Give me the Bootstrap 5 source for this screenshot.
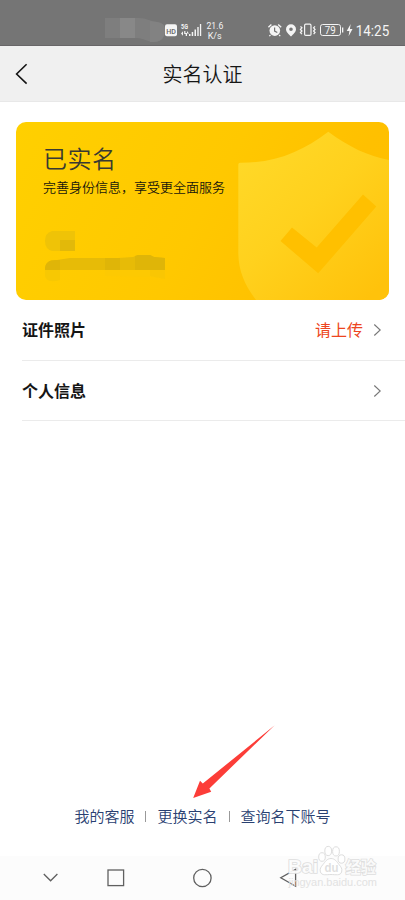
<!DOCTYPE html>
<html lang="zh-CN">
<head>
<meta charset="utf-8">
<meta name="viewport" content="width=device-width, initial-scale=1">
<title>实名认证</title>
<link href="https://cdn.jsdelivr.net/npm/bootstrap@5.3.0/dist/css/bootstrap.min.css" rel="stylesheet">
<style>
html,body{height:100%}
body{font-family:"Noto Sans CJK SC",sans-serif;background:#fff;color:#111;overflow:hidden}
svg{display:block}
.screen{width:405px;height:900px}
.status-bar{height:46px;background:#757575;border-bottom:1px solid #686668}
.title-bar{height:56px;background:#f0f0f0;border-bottom:1px solid #e8e8e8;padding:0 15px}
.title-bar h1{font-size:20px;line-height:24px;font-weight:350;color:#161616}
.side{width:14px}
.id-card{height:178px;margin:20px 16px 0;border-radius:10px;background:linear-gradient(118deg,#ffd000 0%,#ffc800 50%,#ffc000 78%,#ffbe00 100%);padding:21px 27px}
.id-card h2{font-size:24px;line-height:30px;font-weight:350;color:#393a32;letter-spacing:.5px}
.id-card p{font-size:13px;line-height:18px;font-weight:350;color:#17160c;margin-top:5px}
.shield{right:0;top:0}
.redacted{margin-top:35px;margin-left:2px}
.item{height:60px;margin-left:22px;padding-right:23px;border-bottom:1px solid #ebebeb;font-size:16px}
.item:first-of-type{height:61px}
.item span{line-height:24px;padding-bottom:2px}
.item-label{font-weight:700;color:#151515}
.upload{color:#ed4520;margin-right:10px}
.foot-links{height:24px;font-size:15px;line-height:24px}
.foot-links a{color:#294071;font-weight:350}
.sep{width:1px;height:11px;background:#999;margin:0 11px}
.arrow{left:190px;top:722px}
.nav-bar{height:44px;margin-top:28px;background:#fcfcfc}
.watermark{left:284px;top:842px}
.watermark text{paint-order:stroke}
</style>
</head>
<body>
<div class="screen d-flex flex-column position-relative">
  <header class="status-bar flex-shrink-0">
    <svg width="405" height="45" viewBox="0 0 405 45" font-family="Roboto, sans-serif" fill="#f4f4f4">
      <path d="M105 18h34c7 0 11 3 17 4 6 0 9 3 9 8 0 8-4 12-11 12-6 0-11-4-17-4h-32z" fill="#7e7e7e"/>
      <path d="M120 18h15v20h-15z" fill="#888"/><path d="M150 21c9 1 15 2 15 9s-4 12-11 12h-4z" fill="#828282"/>
      <rect x="165" y="24.3" width="12" height="12" rx="2"/>
      <text x="166.2" y="33.5" font-size="8" font-weight="500" fill="#666" textLength="9.7" lengthAdjust="spacingAndGlyphs">HD</text>
      <text x="181" y="29.2" font-size="6.5" font-weight="700" textLength="7" lengthAdjust="spacingAndGlyphs">5G</text>
      <path d="M181 33.5l2-2.3v4.6zM184.2 31h1.2v2h1.6v-2l2 2.5h-2v2.500h-1.300v-2h-1.500z"/>
      <path d="M189 34h1.500v2H189zM191.700 32h1.500v4h-1.500zM194.500 29.500h1.500V36h-1.500zM197.300 27h1.400v9h-1.400zM199.900 24h1.300v12h-1.300z"/>
      <text x="206.500" y="28.500" font-size="9" textLength="16.800" lengthAdjust="spacingAndGlyphs">21.6</text>
      <text x="207.700" y="39" font-size="9" textLength="14" lengthAdjust="spacingAndGlyphs">K/s</text>
      <circle cx="274.800" cy="30.600" r="5.300"/>
      <path d="M268.400 27.200l3-2.800M281.200 27.200l-3-2.800" fill="none" stroke="#f4f4f4" stroke-width="1.400"/>
      <path d="M270.500 35l-1.200 1.200M279.100 35l1.200 1.200" stroke="#f4f4f4" stroke-width="1.200"/>
      <path d="M274.600 27.400v3.700l2.700 1.500" fill="none" stroke="#757575" stroke-width="1.200"/>
      <path fill-rule="evenodd" d="M291 24.200a5 5 0 0 0-5 5c0 3 2.800 4.900 5 7.300 2.200-2.400 5-4.300 5-7.300a5 5 0 0 0-5-5zm0 3.200a1.800 1.800 0 1 1 0 3.600 1.800 1.800 0 0 1 0-3.600z"/>
      <rect x="304.600" y="24.200" width="6.400" height="11.200" rx="1.200" fill="none" stroke="#f4f4f4" stroke-width="1.200"/>
      <path d="M300.500 26.400l1.400 1.400-1.400 1.600 1.400 1.600-1.400 1.600 1.400 1.500M315 26.400l-1.400 1.400 1.400 1.600-1.400 1.600 1.400 1.600-1.400 1.500" fill="none" stroke="#f4f4f4" stroke-width="1.300"/>
      <rect x="320.500" y="24.500" width="20" height="11" rx="2.200" fill="none" stroke="#f4f4f4"/>
      <path d="M342 27.500h1.300v5H342z"/>
      <text x="324.800" y="33.700" font-size="10" textLength="11" lengthAdjust="spacingAndGlyphs">79</text>
      <path d="M350.700 24l-4 7h2.700l-.8 5.200 3.900-7.200h-2.600z"/>
      <text x="355.800" y="36" font-size="14.300" textLength="33.400" lengthAdjust="spacingAndGlyphs">14:25</text>
    </svg>
  </header>
  <nav class="title-bar d-flex align-items-center justify-content-between flex-shrink-0">
    <svg class="side" width="14" height="22" viewBox="0 0 14 22" fill="none" stroke="#151515" stroke-width="1.600"><path d="M11.600 1.200L1.600 11l10 9.600"/></svg>
    <h1 class="m-0">实名认证</h1>
    <span class="side"></span>
  </nav>
  <main class="d-flex flex-column flex-grow-1">
    <section class="id-card position-relative overflow-hidden flex-shrink-0">
      <svg class="shield position-absolute" width="151" height="178" viewBox="238 122 151 178">
        <defs><linearGradient id="sg" x1="0" y1="0" x2=".85" y2="1"><stop offset="0" stop-color="#ffda2a"/><stop offset=".5" stop-color="#ffd11d"/><stop offset="1" stop-color="#ffc20b"/></linearGradient></defs>
        <path d="M238.300 164.500q0-1.800 1.800-1.800C276 163 303 151 328.300 131.700 349 147 368 156 389 160V300H256C244 284 238.300 270 238.300 252z" fill="url(#sg)"/>
        <path d="M280.500 241L292 227.500l24.700 20L363 194.600l13.300 12L318.200 273.300z" fill="#ffc000"/>
      </svg>
      <div class="position-relative">
        <h2 class="m-0">已实名</h2>
        <p class="mb-0">完善身份信息，享受更全面服务</p>
        <svg class="redacted" width="120" height="52" viewBox="45 231 120 52">
          <path d="M52 231h23v20H52q-7-2-7-10t7-10z" fill="#efc307"/><path d="M60 240h15v11H60z" fill="#e2b90a"/>
          <path d="M45 270c0-7 3-10 12-10l13-2h48l15-1 5-2h12l4 2 11 1v12z" fill="#e7bb07"/>
          <path d="M45 270c0-7 3-10 12-10h3v10zM105 258h15v12h-15zM135 256l3-1h12l4 2 11 1v12h-30z" fill="#dfb508"/>
          <path d="M45 270h15v10q-13 4-15-4z" fill="#f7c803"/><path d="M105 270h60v9l-15-2-45-1z" fill="#fdc902"/><path d="M150 270h15v9l-15-3z" fill="#f9c603"/>
        </svg>
      </div>
    </section>
    <div class="item d-flex align-items-center flex-shrink-0">
      <span class="item-label me-auto">证件照片</span>
      <span class="upload">请上传</span>
      <svg width="9" height="14" viewBox="0 0 9 14" fill="none" stroke="#777" stroke-width="1.100"><path d="M1.300 1.500L7.200 7l-5.900 5.500"/></svg>
    </div>
    <div class="item d-flex align-items-center flex-shrink-0">
      <span class="item-label me-auto">个人信息</span>
      <svg width="9" height="14" viewBox="0 0 9 14" fill="none" stroke="#777" stroke-width="1.100"><path d="M1.300 1.500L7.200 7l-5.900 5.500"/></svg>
    </div>
    <div class="foot-links d-flex justify-content-center align-items-center mt-auto">
      <a class="text-decoration-none" href="#">我的客服</a><span class="sep"></span>
      <a class="text-decoration-none" href="#">更换实名</a><span class="sep"></span>
      <a class="text-decoration-none" href="#">查询名下账号</a>
    </div>
  </main>
  <footer class="nav-bar flex-shrink-0">
    <svg width="405" height="44" viewBox="0 856 405 44" fill="none" stroke="#606060" stroke-width="1.300">
      <path d="M43.800 874l6.800 6.800 6.800-6.800"/><rect x="108" y="870" width="15.600" height="15.600"/><circle cx="202.400" cy="878" r="8.700"/><path d="M295.600 869.400v16.800l-14.800-8.400z"/>
    </svg>
  </footer>
  <svg class="arrow position-absolute" width="88" height="80" viewBox="190 722 88 80"><path d="M274.700 725.200L202.800 783.600l-2.800-2.800-6.800 17.200 18-6.200-1.800-3.400z" fill="#fc3d38"/></svg>
  <svg class="watermark position-absolute" width="100" height="50" viewBox="284 842 100 50" fill="#fff" fill-opacity=".85" stroke="#dedede" stroke-width="1">
    <text x="288" y="873" font-family="Liberation Sans, sans-serif" font-weight="700" font-size="19" stroke-width="1.600" textLength="30" lengthAdjust="spacingAndGlyphs">Bai</text>
    <ellipse cx="322" cy="857" rx="3.300" ry="4.300"/><ellipse cx="328.200" cy="851" rx="3.400" ry="4.600"/><ellipse cx="336" cy="851.400" rx="3.400" ry="4.600"/><ellipse cx="341.500" cy="859" rx="3.400" ry="4.200"/>
    <path d="M331 858.500c4 0 6 3.500 8 6s3.500 4 2.600 7.500c-1.400 4-6 2.500-10.600 2.500s-9 1.500-10.600-2.500c-.9-3.500.6-5 2.600-7.500s4-6 8-6z"/>
    <text x="324.500" y="872" font-family="Liberation Sans, sans-serif" font-weight="700" font-size="12" fill="#dadada" stroke="none" textLength="14" lengthAdjust="spacingAndGlyphs">du</text>
    <text x="345.500" y="872.500" font-family="Noto Sans CJK SC, sans-serif" font-weight="700" font-size="15.500" stroke-width="1.500" textLength="30.500" lengthAdjust="spacingAndGlyphs">经验</text>
    <text x="288.500" y="885.500" font-family="Liberation Sans, sans-serif" font-size="10" fill="#e2e2e2" fill-opacity="1" stroke="none" textLength="88.500" lengthAdjust="spacingAndGlyphs">jingyan.baidu.com</text>
  </svg>
</div>
<script src="https://cdn.jsdelivr.net/npm/bootstrap@5.3.0/dist/js/bootstrap.bundle.min.js"></script>
</body>
</html>
